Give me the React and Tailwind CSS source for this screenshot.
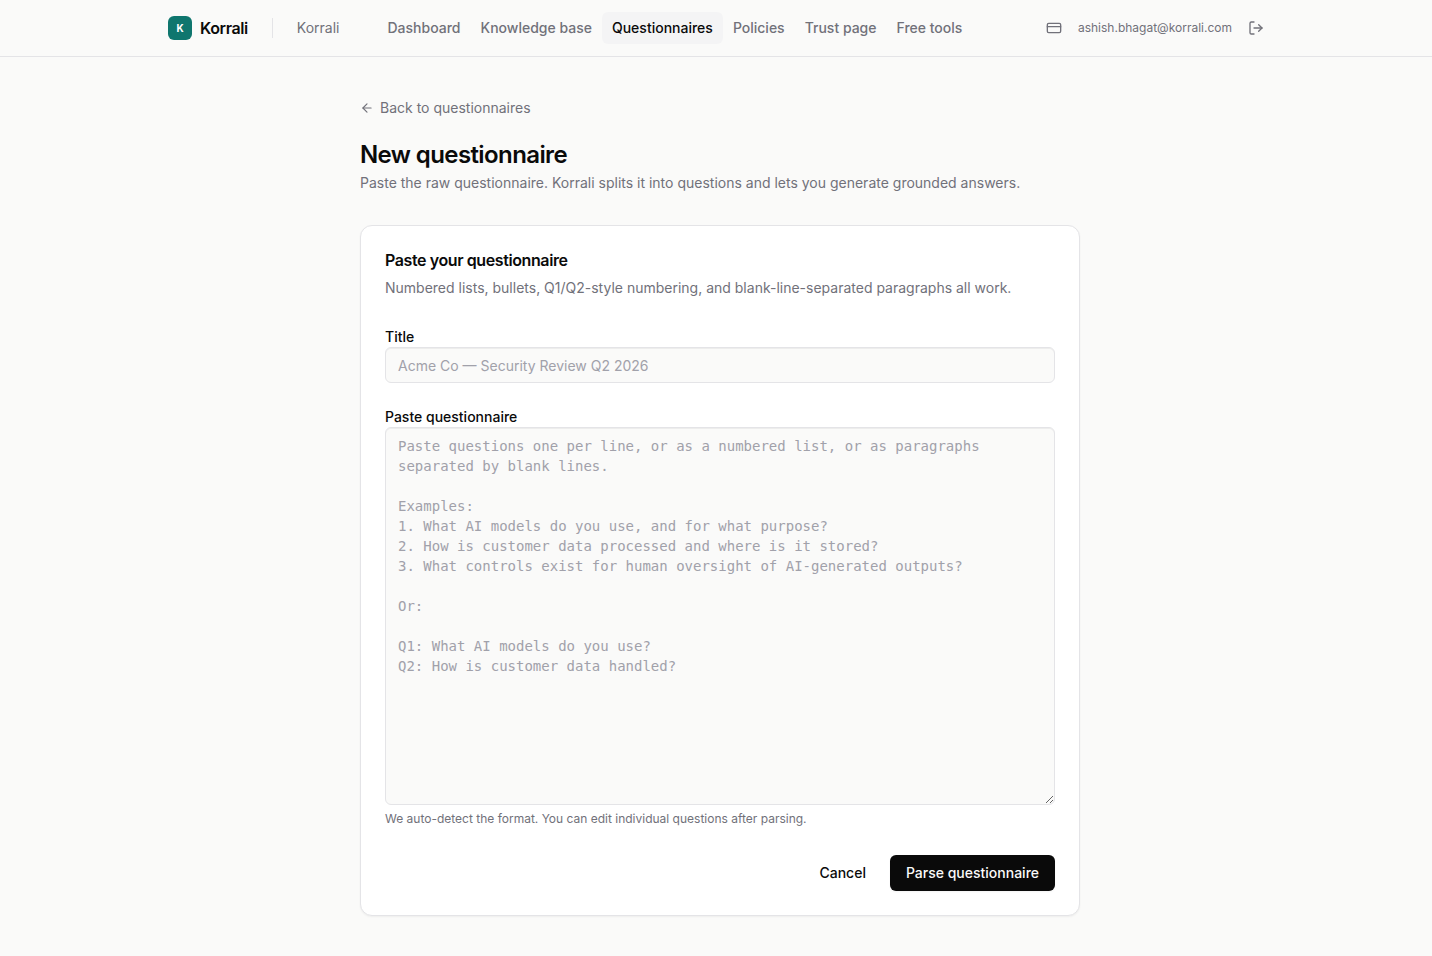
import React, { useState } from 'react';
import { ArrowLeft, CreditCard, LogOut } from 'lucide-react';

const NAV_ITEMS = ['Dashboard', 'Knowledge base', 'Questionnaires', 'Policies', 'Trust page', 'Free tools'];

const EXAMPLE = `Paste questions one per line, or as a numbered list, or as paragraphs separated by blank lines.

Examples:
1. What AI models do you use, and for what purpose?
2. How is customer data processed and where is it stored?
3. What controls exist for human oversight of AI-generated outputs?

Or:

Q1: What AI models do you use?
Q2: How is customer data handled?`;

function Header() {
    return (
        <header className="border-b border-[#e4e4e7] pl-2">
            <div className="mx-auto flex h-14 max-w-6xl items-center justify-between px-6">
                <div className="flex items-center">
                    <a href="#home" className="flex items-center gap-2">
                        <span className="flex h-6 w-6 items-center justify-center rounded-md bg-[#0f766e] text-[10px] font-bold text-white">K</span>
                        <span className="text-base font-semibold tracking-tight">Korrali</span>
                    </a>
                    <span className="mx-6 h-5 w-px bg-[#e4e4e7]" />
                    <span className="text-sm text-[#71717a]">Korrali</span>
                    <nav className="ml-9.5 flex items-center">
                        {NAV_ITEMS.map((item) => (
                            <a
                                key={item}
                                href={`#${item}`}
                                className={`rounded-md px-2.5 py-1.5 text-sm font-medium whitespace-nowrap ${item === 'Questionnaires' ? 'bg-[#f4f4f5] text-[#0a0a0a]' : 'text-[#71717a]'}`}
                            >
                                {item}
                            </a>
                        ))}
                    </nav>
                </div>
                <div className="flex items-center gap-2 text-[#71717a]">
                    <a href="#billing" aria-label="Billing" className="p-2"><CreditCard size={16} /></a>
                    <span className="text-xs">ashish.bhagat@korrali.com</span>
                    <button type="button" aria-label="Sign out" className="p-2"><LogOut size={16} /></button>
                </div>
            </div>
        </header>
    );
}

export default function App() {
    const [title, setTitle] = useState('');
    const [text, setText] = useState('');

    return (
        <div className="min-h-screen bg-[#fafaf9] font-['Inter',sans-serif] text-[#0a0a0a] antialiased">
            <Header />

            <main className="pl-2">
                <div className="mx-auto max-w-3xl px-6 py-10">
                    <a href="#questionnaires" className="mb-5 flex h-5.5 w-fit items-center gap-1.5 text-sm text-[#71717a]">
                        <ArrowLeft size={14} />
                        Back to questionnaires
                    </a>
                    <h1 className="text-2xl font-semibold tracking-tight">New questionnaire</h1>
                    <p className="mt-0.5 text-sm text-[#71717a]">Paste the raw questionnaire. Korrali splits it into questions and lets you generate grounded answers.</p>

                    <form onSubmit={(e) => e.preventDefault()} className="mt-8 rounded-xl border border-[#e4e4e7] bg-white p-6 shadow-xs">
                        <h2 className="text-base leading-5 font-semibold tracking-tight">Paste your questionnaire</h2>
                        <p className="mt-2 text-sm text-[#71717a]">Numbered lists, bullets, Q1/Q2-style numbering, and blank-line-separated paragraphs all work.</p>

                        <div className="mt-7">
                            <label htmlFor="title" className="block text-sm leading-[21px] font-medium">Title</label>
                            <input
                                id="title"
                                value={title}
                                onChange={(e) => setTitle(e.target.value)}
                                placeholder="Acme Co — Security Review Q2 2026"
                                className="block h-9 w-full rounded-md border border-[#e4e4e7] bg-[#fafaf9] px-3 text-sm inset-shadow-2xs placeholder:text-[#a1a1aa]"
                            />
                        </div>

                        <div className="mt-[23px]">
                            <label htmlFor="questionnaire" className="block text-sm leading-[21px] font-medium">Paste questionnaire</label>
                            <textarea
                                id="questionnaire"
                                rows={18}
                                value={text}
                                onChange={(e) => setText(e.target.value)}
                                placeholder={EXAMPLE}
                                className="block w-full rounded-md border border-[#e4e4e7] bg-[#fafaf9] px-3 py-2 font-['DejaVu_Sans_Mono',monospace] text-sm inset-shadow-2xs placeholder:text-[#a1a1aa]"
                            />
                            <p className="mt-1.5 text-xs text-[#71717a]">We auto-detect the format. You can edit individual questions after parsing.</p>
                        </div>

                        <div className="mt-7 flex justify-end gap-2">
                            <button type="button" className="h-9 rounded-md px-4 text-sm font-medium">Cancel</button>
                            <button type="submit" className="h-9 rounded-md bg-[#0a0a0a] px-4 text-sm font-medium text-[#fafaf9] shadow-xs">Parse questionnaire</button>
                        </div>
                    </form>
                </div>
            </main>
        </div>
    );
}
